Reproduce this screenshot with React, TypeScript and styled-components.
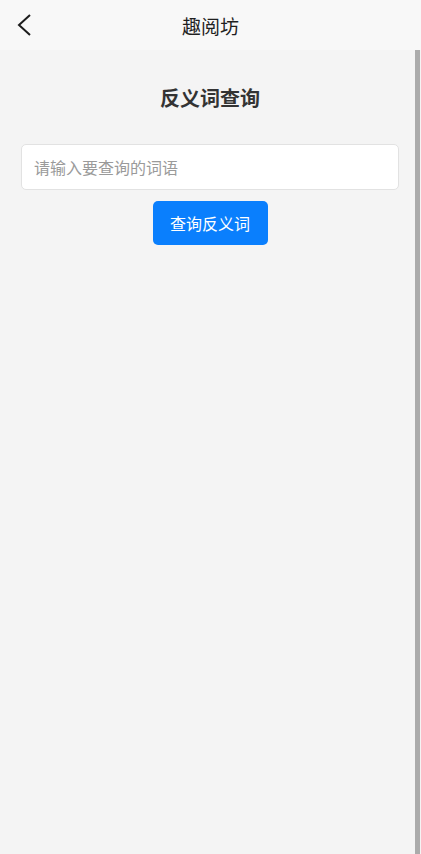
import React, { useState } from 'react'
import styled, { createGlobalStyle } from 'styled-components'

const GlobalStyle = createGlobalStyle`
    html, body {
        margin: 0;
        padding: 0;
        background: #f4f4f4;
    }
    body {
        font-family: "Noto Sans CJK SC", "Noto Sans", "Liberation Sans", sans-serif;
    }
    * {
        box-sizing: border-box;
    }
`

const Page = styled.div`
    position: relative;
    width: 421px;
    height: 854px;
    display: flex;
    flex-direction: column;
    background: #f4f4f4;
    overflow: hidden;
`

const NavBar = styled.header`
    height: 50px;
    flex-shrink: 0;
    display: grid;
    grid-template-columns: 60px 1fr 60px;
    align-items: center;
    background: #f8f8f8;
`

const BackButton = styled.button`
    border: none;
    background: transparent;
    padding: 0 0 0 17px;
    height: 50px;
    display: flex;
    align-items: center;
    cursor: pointer;
`

const NavTitle = styled.h1`
    margin: 0;
    text-align: center;
    font-size: 19px;
    font-weight: 400;
    color: #1f1f1f;
`

const Content = styled.main`
    flex: 1;
    padding: 0 22px 0 21px;
    display: flex;
    flex-direction: column;
    align-items: center;
`

const PageTitle = styled.h2`
    margin: 34px 0 0;
    font-size: 20px;
    font-weight: 700;
    color: #333;
    line-height: 28px;
`

const SearchInput = styled.input`
    margin-top: 32px;
    width: 100%;
    height: 46px;
    padding: 0 12px;
    border: 1px solid #e2e2e2;
    border-radius: 5px;
    background: #fff;
    font-family: inherit;
    font-size: 16px;
    color: #333;
    outline: none;

    &::placeholder {
        color: #9a9a9a;
    }
`

const SearchButton = styled.button`
    margin-top: 11px;
    width: 115px;
    height: 44px;
    border: none;
    border-radius: 5px;
    background: #0a7ffd;
    color: #fff;
    font-family: inherit;
    font-size: 16px;
    cursor: pointer;
`

const ScrollThumb = styled.div`
    position: absolute;
    top: 50px;
    right: 1px;
    bottom: 0;
    width: 5px;
    background: #ababab;
`

export default function App() {
    const [word, setWord] = useState('')

    return (
        <Page>
            <GlobalStyle />
            <NavBar>
                <BackButton aria-label="返回">
                    <svg width="16" height="22" viewBox="0 0 16 22" fill="none">
                        <path d="M13 1 L2 11 L13 21" stroke="#1c1c1c" strokeWidth="2" />
                    </svg>
                </BackButton>
                <NavTitle>趣阅坊</NavTitle>
                <span />
            </NavBar>
            <Content>
                <PageTitle>反义词查询</PageTitle>
                <SearchInput
                    value={word}
                    onChange={e => setWord(e.target.value)}
                    placeholder="请输入要查询的词语"
                />
                <SearchButton>查询反义词</SearchButton>
            </Content>
            <ScrollThumb />
        </Page>
    )
}
